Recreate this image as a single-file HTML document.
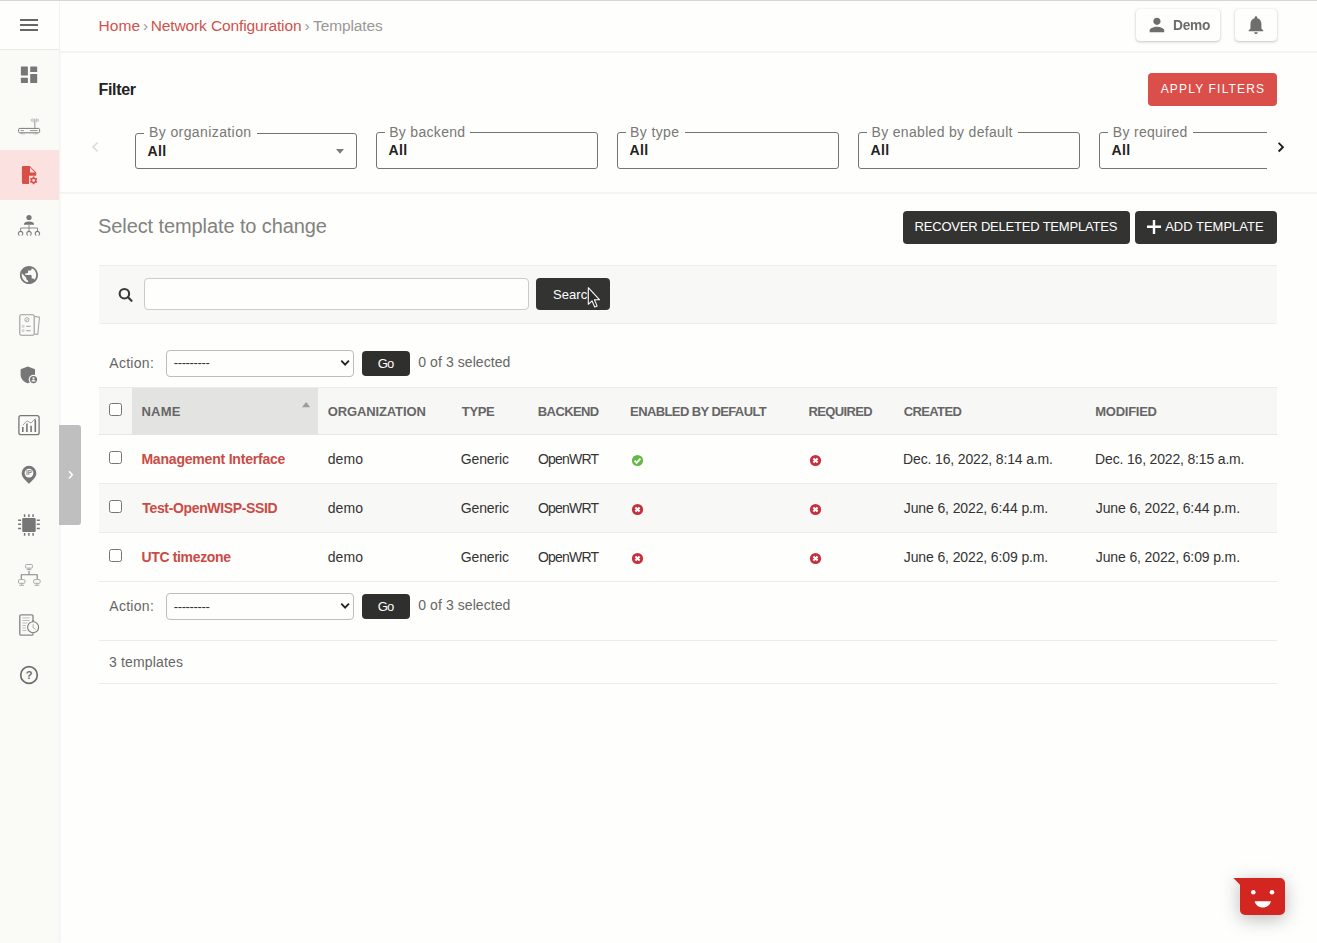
<!DOCTYPE html>
<html lang="en">
<head>
<meta charset="utf-8">
<title>Select template to change | OpenWISP</title>
<style>
*{box-sizing:border-box;margin:0;padding:0}
html,body{width:1317px;height:943px;overflow:hidden}
body{background:#fefefc;font-family:"Liberation Sans",sans-serif;color:#333;font-size:14px;position:relative}
.abs{position:absolute}
a{text-decoration:none;color:inherit}
.t{position:absolute;white-space:nowrap;line-height:1}
.lnk{color:#d0524c}
#topline{left:0;top:0;width:1317px;height:1px;background:#d6d6d6}
#sidebar{left:0;top:1px;width:59px;height:942px;background:#fafaf6;box-shadow:1px 0 2px rgba(0,0,0,.07)}
#hamb{left:0;top:1px;width:59px;height:49px;background:#fefefc;border-bottom:1px solid #e9e9e7}
#hamb i{position:absolute;left:20px;width:18px;height:2px;background:#666}
#topbar{left:60px;top:1px;width:1257px;height:52px;border-bottom:2px solid #f4f4f2;background:#fefefc}
#menu-active{left:0;top:150px;width:59px;height:50px;background:#fbe2e0}
#handle{left:59px;top:425px;width:22px;height:100px;background:#bfbfbf;border-radius:0 3px 3px 0}
.btn-top{position:absolute;top:9px;height:32px;background:#fefefc;border-radius:4px;box-shadow:0 1px 3px rgba(0,0,0,.22),0 0 1px rgba(0,0,0,.12)}
#apply{left:1148px;top:73px;width:129px;height:33px;background:#da4f49;border-radius:4px}
.fbox{position:absolute;top:132px;height:37px;width:222px;border:1px solid #747472;border-radius:3px}
.fgap{position:absolute;top:129px;height:6px;background:#fefefc}
#fsec-border{left:60px;top:192px;width:1257px;height:2px;background:#f4f4f2}
.dbtn{position:absolute;top:211px;height:33px;background:#333331;border-radius:4px}
#searchbar{left:99px;top:265px;width:1178px;height:59px;background:#f8f8f6;border-top:1px solid #ededeb;border-bottom:1px solid #ededeb}
#sinput{left:144px;top:278px;width:385px;height:32px;background:#fefefc;border:1px solid #cbcbc9;border-radius:4px}
#sbtn{left:536px;top:278px;width:74px;height:32px;background:#333331;border-radius:4px}
.sel{position:absolute;left:166px;width:188px;height:27px;border:1px solid #bdbdbb;border-radius:4px;background:#fefefc}
.go{position:absolute;left:362px;width:48px;height:25px;background:#2f2f2d;border-radius:4px}
#thead{left:99px;top:387px;width:1178px;height:48px;background:#f7f7f5;border-top:1px solid #ebebe9;border-bottom:1px solid #e6e6e4}
#th-name{left:132px;top:388px;width:186px;height:46px;background:#e3e3e1}
.th{font-size:13px;font-weight:bold;color:#666}
.row{position:absolute;left:99px;width:1178px;height:49px;border-bottom:1px solid #ebebe9}
.row.alt{background:#f8f8f6}
.td{font-size:14px;color:#333}
.nm{font-size:14px;font-weight:bold;color:#cb4a45}
.cb{position:absolute;left:109px;width:13px;height:13px;border:1px solid #767676;border-radius:2.5px;background:#fff}
.hl{position:absolute;left:99px;width:1178px;height:1px;background:#ebebe9}
.g{color:#666}
svg{position:absolute;overflow:visible}
</style>
</head>
<body>
<div class="abs" id="sidebar"></div>
<div class="abs" id="hamb"><i style="top:18px"></i><i style="top:23px"></i><i style="top:28px"></i></div>
<div class="abs" id="topbar"></div>
<div class="abs" id="topline"></div>
<div class="abs" id="menu-active"></div>
<div class="abs" id="handle"></div>

<!-- breadcrumbs -->
<a href="#" class="t lnk" style="left:98.6px;top:18px;font-size:15.5px;letter-spacing:0.07px">Home</a>
<span class="t" style="left:142.9px;top:18px;font-size:15.5px;color:#999;letter-spacing:0.00px">&rsaquo;</span>
<a href="#" class="t lnk" style="left:150.8px;top:18px;font-size:15.5px;letter-spacing:-0.13px">Network Configuration</a>
<span class="t" style="left:304.6px;top:18px;font-size:15.5px;color:#999;letter-spacing:0.00px">&rsaquo;</span>
<span class="t" style="left:313.0px;top:18px;font-size:15.5px;color:#9a9894;letter-spacing:-0.10px">Templates</span>

<!-- user buttons -->
<div class="btn-top" style="left:1136px;width:84px"></div>
<span class="t" style="left:1173.2px;top:17px;font-size:15px;font-weight:bold;color:#6b6b6b;letter-spacing:-0.3px;transform:scaleX(.915);transform-origin:0 0">Demo</span>
<div class="btn-top" style="left:1235px;width:42px"></div>

<!-- filter -->
<span class="t" style="left:98.5px;top:82px;font-size:16px;font-weight:bold;color:#222;letter-spacing:-0.34px">Filter</span>
<div class="abs" id="apply"></div>
<span class="t" style="left:1160.7px;top:83px;font-size:12px;color:#fff;letter-spacing:1.17px">APPLY FILTERS</span>

<div class="fbox" style="left:135px;top:133px;height:36px"></div>
<div class="fbox" style="left:376px"></div>
<div class="fbox" style="left:617px"></div>
<div class="fbox" style="left:858px"></div>
<div class="fbox" style="left:1099px"></div>
<div class="fgap" style="left:144px;width:112.5px;top:130px"></div>
<div class="fgap" style="left:385px;width:85px"></div>
<div class="fgap" style="left:626px;width:58.5px"></div>
<div class="fgap" style="left:867px;width:151.3px"></div>
<div class="fgap" style="left:1108px;width:85px"></div>
<span class="t g" style="left:149.0px;top:125px;font-size:14px;color:#787876;letter-spacing:0.40px">By organization</span>
<span class="t g" style="left:389.2px;top:125px;font-size:14px;color:#787876;letter-spacing:0.31px">By backend</span>
<span class="t g" style="left:630.0px;top:125px;font-size:14px;color:#787876;letter-spacing:0.40px">By type</span>
<span class="t g" style="left:871.6px;top:125px;font-size:14px;color:#787876;letter-spacing:0.31px">By enabled by default</span>
<span class="t g" style="left:1112.8px;top:125px;font-size:14px;color:#787876;letter-spacing:0.30px">By required</span>
<span class="t" style="left:147.4px;top:144px;font-size:14px;font-weight:bold;color:#222;letter-spacing:0.44px">All</span>
<span class="t" style="left:388.4px;top:143px;font-size:14px;font-weight:bold;color:#222;letter-spacing:0.44px">All</span>
<span class="t" style="left:629.4px;top:143px;font-size:14px;font-weight:bold;color:#222;letter-spacing:0.44px">All</span>
<span class="t" style="left:870.4px;top:143px;font-size:14px;font-weight:bold;color:#222;letter-spacing:0.44px">All</span>
<span class="t" style="left:1111.4px;top:143px;font-size:14px;font-weight:bold;color:#222;letter-spacing:0.44px">All</span>
<div class="abs" style="left:1267px;top:120px;width:50px;height:60px;background:#fefefc"></div>
<div class="abs" id="fsec-border"></div>

<!-- title + buttons -->
<span class="t" style="left:98.1px;top:216px;font-size:20px;color:#828280;letter-spacing:-0.10px">Select template to change</span>
<div class="dbtn" style="left:903px;width:227px"></div>
<span class="t" style="left:914.6px;top:220px;font-size:13px;color:#fff;letter-spacing:-0.20px">RECOVER DELETED TEMPLATES</span>
<div class="dbtn" style="left:1135px;width:142px"></div>
<span class="t" style="left:1165.2px;top:220px;font-size:13px;color:#fff;letter-spacing:-0.00px">ADD TEMPLATE</span>

<!-- search -->
<div class="abs" id="searchbar"></div>
<div class="abs" id="sinput"></div>
<div class="abs" id="sbtn"></div>
<span class="t" style="left:553.1px;top:288px;font-size:13px;color:#fff;letter-spacing:0.02px">Search</span>

<!-- actions top -->
<span class="t g" style="left:109.3px;top:356px;font-size:14px;letter-spacing:0.28px">Action:</span>
<div class="sel" style="top:350px"></div>
<span class="t" style="left:173.7px;top:356px;font-size:13px;color:#333;letter-spacing:-0.35px">---------</span>
<div class="go" style="top:351px"></div>
<span class="t" style="left:377.7px;top:357px;font-size:13px;color:#fff;letter-spacing:-0.70px">Go</span>
<span class="t g" style="left:418.3px;top:355px;font-size:14px;letter-spacing:0.07px">0 of 3 selected</span>

<!-- table -->
<div class="abs" id="thead"></div>
<div class="abs" id="th-name"></div>
<div class="cb" style="top:403px"></div>
<span class="t th" style="left:141.4px;top:405px;letter-spacing:0.25px">NAME</span>
<span class="t th" style="left:327.8px;top:405px;letter-spacing:-0.13px">ORGANIZATION</span>
<span class="t th" style="left:461.8px;top:405px;letter-spacing:-0.35px">TYPE</span>
<span class="t th" style="left:537.8px;top:405px;letter-spacing:-0.59px">BACKEND</span>
<span class="t th" style="left:630.1px;top:405px;letter-spacing:-0.60px">ENABLED BY DEFAULT</span>
<span class="t th" style="left:808.4px;top:405px;letter-spacing:-0.61px">REQUIRED</span>
<span class="t th" style="left:903.7px;top:405px;letter-spacing:-0.62px">CREATED</span>
<span class="t th" style="left:1095.2px;top:405px;letter-spacing:-0.25px">MODIFIED</span>

<div class="row" style="top:435px"></div>
<div class="row alt" style="top:484px"></div>
<div class="row" style="top:533px"></div>

<div class="cb" style="top:451px"></div>
<a href="#" class="t nm" style="left:141.4px;top:452px;letter-spacing:-0.20px">Management Interface</a>
<span class="t td" style="left:327.7px;top:452px;letter-spacing:0.15px">demo</span>
<span class="t td" style="left:460.8px;top:452px;letter-spacing:-0.14px">Generic</span>
<span class="t td" style="left:538.0px;top:452px;letter-spacing:-0.80px">OpenWRT</span>
<span class="t td" style="left:903.1px;top:452px;letter-spacing:-0.15px">Dec. 16, 2022, 8:14 a.m.</span>
<span class="t td" style="left:1095.1px;top:452px;letter-spacing:-0.17px">Dec. 16, 2022, 8:15 a.m.</span>

<div class="cb" style="top:500px"></div>
<a href="#" class="t nm" style="left:142.3px;top:501px;letter-spacing:-0.35px">Test-OpenWISP-SSID</a>
<span class="t td" style="left:327.7px;top:501px;letter-spacing:0.15px">demo</span>
<span class="t td" style="left:460.8px;top:501px;letter-spacing:-0.14px">Generic</span>
<span class="t td" style="left:538.0px;top:501px;letter-spacing:-0.80px">OpenWRT</span>
<span class="t td" style="left:903.8px;top:501px;letter-spacing:-0.12px">June 6, 2022, 6:44 p.m.</span>
<span class="t td" style="left:1095.8px;top:501px;letter-spacing:-0.13px">June 6, 2022, 6:44 p.m.</span>

<div class="cb" style="top:549px"></div>
<a href="#" class="t nm" style="left:141.4px;top:550px;letter-spacing:-0.33px">UTC timezone</a>
<span class="t td" style="left:327.7px;top:550px;letter-spacing:0.15px">demo</span>
<span class="t td" style="left:460.8px;top:550px;letter-spacing:-0.14px">Generic</span>
<span class="t td" style="left:538.0px;top:550px;letter-spacing:-0.80px">OpenWRT</span>
<span class="t td" style="left:903.8px;top:550px;letter-spacing:-0.12px">June 6, 2022, 6:09 p.m.</span>
<span class="t td" style="left:1095.8px;top:550px;letter-spacing:-0.13px">June 6, 2022, 6:09 p.m.</span>

<!-- actions bottom -->
<span class="t g" style="left:109.3px;top:599px;font-size:14px;letter-spacing:0.28px">Action:</span>
<div class="sel" style="top:593px"></div>
<span class="t" style="left:173.7px;top:600px;font-size:13px;color:#333;letter-spacing:-0.35px">---------</span>
<div class="go" style="top:594px"></div>
<span class="t" style="left:377.7px;top:600px;font-size:13px;color:#fff;letter-spacing:-0.70px">Go</span>
<span class="t g" style="left:418.3px;top:598px;font-size:14px;letter-spacing:0.07px">0 of 3 selected</span>

<div class="hl" style="top:640px"></div>
<span class="t" style="left:108.9px;top:655px;font-size:14px;color:#666;letter-spacing:0.17px">3 templates</span>
<div class="hl" style="top:683px"></div>
<!-- sidebar icons -->
<svg style="left:0;top:0" width="60" height="943" viewBox="0 0 60 943" fill="none">
 <!-- dashboard -->
 <g fill="#777"><rect x="20.9" y="66.6" width="7" height="9" rx=".5"/><rect x="20.9" y="77.8" width="7" height="5.2" rx=".5"/><rect x="30.2" y="66.6" width="7" height="5.3" rx=".5"/><rect x="30.2" y="74.1" width="7" height="8.9" rx=".5"/></g>
 <!-- router -->
 <g stroke="#7a7a7a" stroke-width="1" fill="none">
  <rect x="18.6" y="128.4" width="21" height="4.4" rx="1.2"/>
  <path d="M34.800 128V119" stroke="#b0b0b0" stroke-width="1.400"/>
  <path d="M33 118.3v4M31.4 119v2.6M36.6 118.3v4M38.2 119v2.6" stroke="#c6c6c6" stroke-width="1.300"/>
  <path d="M20.6 130.6h3.2M30 130.6h7.6" stroke-width=".8"/>
  <path d="M20.4 133.8h4.4M33.4 133.8h4.4" stroke="#aaa" stroke-width=".8"/>
 </g>
 <!-- templates (active) -->
 <g>
  <path d="M23.200 165.900h6.600l6.400 6.600v3.200h-7.100v8.200H23.200a1.300 1.300 0 0 1-1.300-1.300V167.200a1.300 1.300 0 0 1 1.300-1.300z" fill="#d64f49"/>
  <path d="M30 167.300v5.100h4.900z" fill="#fbddda"/>
  <g fill="#d64f49"><circle cx="33.600" cy="180.400" r="2.800"/>
   <g stroke="#d64f49" stroke-width="1.700"><path d="M33.600 176.600v7.600M30.300 178.500l6.600 3.800M30.300 182.300l6.600-3.800"/></g>
  </g>
  <circle cx="33.600" cy="180.400" r="1.350" fill="#fbe2e0"/>
 </g>
 <!-- organizations -->
 <g>
  <circle cx="29" cy="217.5" r="2.6" fill="#777"/>
  <path d="M23.8 224.7c0-2.2 2.3-3.3 5.2-3.3s5.2 1.1 5.2 3.3z" fill="#777"/>
  <path d="M29 224.7v6.2M20.6 231v-3h16.9v3" stroke="#8a8a8a" stroke-width="1"/>
  <g stroke="#7c7c7c" stroke-width="1.100"><path d="M19.500 235.500a2.200 2.200 0 1 1 2.200 0M27.900 235.500a2.200 2.200 0 1 1 2.200 0M36.300 235.500a2.200 2.200 0 1 1 2.200 0"/></g>
 </g>
 <!-- globe -->
 <g transform="translate(18.1 264.1) scale(.906)"><path fill="#777" d="M12 2C6.48 2 2 6.48 2 12s4.48 10 10 10 10-4.48 10-10S17.52 2 12 2zm-1 17.930c-3.950-.490-7-3.850-7-7.930 0-.620.080-1.210.210-1.790L9 15v1c0 1.100.900 2 2 2v1.930zm6.900-2.540c-.260-.810-1-1.390-1.900-1.390h-1v-3c0-.550-.450-1-1-1H8v-2h2c.550 0 1-.450 1-1V7h2c1.100 0 2-.900 2-2v-.410c2.930 1.190 5 4.060 5 7.410 0 2.080-.800 3.970-2.100 5.390z"/></g>
 <!-- papers -->
 <g stroke="#9a9a9a" stroke-width="1.1">
  <path d="M34.6 316.4l4.9.8-1.7 17.200-3.200-.3" stroke="#a8a8a8"/>
  <rect x="19.8" y="314.700" width="14.400" height="20.600" rx="1.500"/>
  <circle cx="26.900" cy="319.700" r="2.100" stroke-width=".8"/>
  <path d="M25.800 321l2.200-2.600" stroke-width=".7"/>
  <path d="M22.300 325.500h1.800v1.800h-1.800zM22.300 329.700h1.800v1.800h-1.800z" stroke-width=".6" stroke="#b5b5b5"/>
  <path d="M26.300 326.400h4.300M26.300 330.600h4.300" stroke-width="1.200" stroke="#b0b0b0"/>
 </g>
 <!-- shield -->
 <g>
  <path d="M27.800 366.400l7.200 2.900v5.300c0 4.100-2.900 7.600-7.200 8.700-4.300-1.100-7.200-4.600-7.200-8.700v-5.300z" fill="#777"/>
  <circle cx="33.500" cy="379.600" r="4.800" fill="#fafaf6"/>
  <circle cx="33.500" cy="379.600" r="3.600" fill="#777"/>
  <circle cx="33.500" cy="378.400" r="1.100" fill="#fafaf6"/>
  <path d="M31.300 381.600c.3-1.100 1.200-1.500 2.200-1.500s1.900.4 2.200 1.500z" fill="#fafaf6"/>
 </g>
 <!-- chart -->
 <g stroke="#777">
  <rect x="18.900" y="415.700" width="20.200" height="19" rx="2" stroke-width="1.300"/>
  <path d="M22.800 432v-5M26.900 432v-8.500M31.100 432v-6.300M35.300 432v-12.500" stroke-width="1.600"/>
  <path d="M22.800 425.200l4.100-4.300 4.200 2.100 4.200-4.500" stroke-width=".8" stroke="#8a8a8a"/>
 </g>
 <!-- ip pin -->
 <g>
  <path d="M29 465.800a7.350 7.350 0 0 1 7.350 7.350c0 4.300-4.600 7.600-7.350 10.700-2.750-3.100-7.350-6.400-7.350-10.700A7.350 7.350 0 0 1 29 465.800z" fill="#777"/>
  <circle cx="29" cy="473.100" r="4.400" fill="#fafaf6"/>
  <text x="29" y="475.400" text-anchor="middle" font-family="Liberation Sans, sans-serif" font-size="6.500" font-weight="bold" fill="#8a8a8a">IP</text>
 </g>
 <!-- chip -->
 <g fill="#777">
  <rect x="22.200" y="518" width="13.500" height="13.900" rx="1"/>
  <g stroke="#777" stroke-width="1.500">
   <path d="M24.600 514.200v2.700M28.900 514.200v2.700M33.100 514.200v2.700M24.600 533.100v2.700M28.900 533.100v2.700M33.100 533.100v2.700"/>
   <path d="M18.100 520.300h3M18.100 524.300h3M18.100 528.500h3M36.800 520.300h3M36.800 524.300h3M36.800 528.500h3"/>
  </g>
 </g>
 <!-- topology -->
 <g stroke="#a2a2a2" stroke-width=".9">
  <rect x="25.600" y="564.500" width="6.800" height="3.600" rx=".8"/>
  <path d="M29 568.100v1.400M26.800 569.600h4.400"/>
  <path d="M29 570.800v4M21.300 579v-4.200h15.900v4.200" stroke="#858585" stroke-width="1.100"/>
  <rect x="18.500" y="579.600" width="6.400" height="3.700" rx=".8"/>
  <path d="M21.700 583.300v1.800M19.300 585.300h4.800"/>
  <rect x="33.700" y="579.600" width="6.400" height="3.700" rx=".8"/>
  <path d="M36.900 583.300v1.800M34.500 585.300h4.800"/>
 </g>
 <!-- doc + clock -->
 <g stroke="#8a8a8a">
  <path d="M33 621.600V616.100a1.200 1.200 0 0 0-1.200-1.200H21a1.200 1.200 0 0 0-1.200 1.200v17.800a1.200 1.200 0 0 0 1.200 1.200h10.800a1.200 1.200 0 0 0 1.200-1.200v-.600" stroke-width="1.400"/>
  <path d="M22.400 618h7.100M22.400 620.500h7.100M22.400 623h5M22.400 625.600h3.600M22.400 628.100h3.300M22.400 630.500h4" stroke="#b5b5b5" stroke-width=".9"/>
  <circle cx="33.100" cy="627.300" r="5.500" fill="#fafaf6" stroke="#7a7a7a" stroke-width="1.100"/>
  <path d="M33.100 624.300v3.200l2.400 2.100" stroke="#9a9a9a" stroke-width=".9"/>
  <path d="M32 621h2.200" stroke-width="1.400"/>
 </g>
 <!-- help -->
 <g>
  <circle cx="29" cy="675" r="8.300" stroke="#6e6e6e" stroke-width="1.700"/>
  <text x="29" y="679" text-anchor="middle" font-family="Liberation Sans, sans-serif" font-size="11" font-weight="bold" fill="#6e6e6e">?</text>
 </g>
 <!-- handle chevron drawn separately -->
</svg>
<svg style="left:60px;top:425px" width="22" height="100" viewBox="60 425 22 100" fill="none"><path d="M69 471.200l3.300 3.600-3.300 3.600" stroke="#fff" stroke-width="1.500"/></svg>
<!-- top bar icons -->
<svg style="left:1146.150px;top:13.950px" width="21.900" height="21.900" viewBox="0 0 24 24"><path fill="#6e6e6e" d="M12 12c2.210 0 4-1.790 4-4s-1.790-4-4-4-4 1.790-4 4 1.790 4 4 4zm0 2c-2.670 0-8 1.340-8 4v2h16v-2c0-2.660-5.330-4-8-4z"/></svg>
<svg style="left:1245.050px;top:13.600px" width="21.900" height="21.900" viewBox="0 0 24 24"><path fill="#6e6e6e" d="M12 22c1.100 0 2-.900 2-2h-4c0 1.100.890 2 2 2zm6-6v-5c0-3.070-1.640-5.640-4.500-6.320V4c0-.830-.670-1.500-1.500-1.500s-1.500.670-1.500 1.500v.680C7.630 5.360 6 7.920 6 11v5l-2 2v1h16v-1l-2-2z"/></svg>
<!-- filter arrows -->
<svg style="left:0;top:0" width="1317" height="943" viewBox="0 0 1317 943" fill="none">
 <path d="M97.600 142.600l-4.600 4.400 4.600 4.400" stroke="#dcdcdc" stroke-width="1.700"/>
 <path d="M1278.600 142.900l4.300 4.300-4.300 4.300" stroke="#1c1c1c" stroke-width="1.900"/>
 <path d="M336 149.100h8l-4 4.700z" fill="#7c7c7a"/>
 <!-- plus -->
 <path d="M1154 220v14M1147 226.800h14" stroke="#fff" stroke-width="2.400"/>
 <!-- search icon -->
 <circle cx="124.400" cy="293.700" r="4.750" stroke="#3a3a38" stroke-width="2.100"/>
 <path d="M128 297.300l3.500 3.500" stroke="#3a3a38" stroke-width="2.200" stroke-linecap="round"/>
 <!-- select chevrons -->
 <path d="M341.300 360.600l3.800 4 3.800-4" stroke="#222" stroke-width="1.800"/>
 <path d="M341.300 603.600l3.800 4 3.800-4" stroke="#222" stroke-width="1.800"/>
 <!-- sort arrow -->
 <path d="M302 407.300h8.200l-4.100-5.200z" fill="#9c9c9c"/>
 <!-- bool icons -->
 <g>
  <circle cx="637.500" cy="460.500" r="5.600" fill="#64b946"/>
  <path d="M634.600 460.700l2 2.100 3.800-4.200" stroke="#fff" stroke-width="1.900"/>
  <g fill="#c72f3e"><circle cx="815.500" cy="460.500" r="5.600"/><circle cx="637.500" cy="509.500" r="5.600"/><circle cx="815.500" cy="509.500" r="5.600"/><circle cx="637.500" cy="558.500" r="5.600"/><circle cx="815.500" cy="558.500" r="5.600"/></g>
  <g stroke="#fff" stroke-width="2.100">
   <path d="M813.400 458.400l4.200 4.200M817.600 458.400l-4.200 4.200"/>
   <path d="M635.400 507.400l4.200 4.200M639.600 507.400l-4.200 4.200"/>
   <path d="M813.400 507.400l4.200 4.200M817.600 507.400l-4.200 4.200"/>
   <path d="M635.400 556.400l4.200 4.200M639.600 556.400l-4.200 4.200"/>
   <path d="M813.400 556.400l4.200 4.200M817.600 556.400l-4.200 4.200"/>
  </g>
 </g>
 <!-- mouse cursor -->
 <path d="M588.300 287.700v16.600l3.700-3.500 2.700 6.200 2.400-1.100-2.700-6.100h5.200z" fill="#2a2a29" stroke="#fff" stroke-width="1.050" stroke-linejoin="round"/>
</svg>
<!-- chat widget -->
<svg style="left:1195px;top:845px;filter:drop-shadow(0 4px 9px rgba(0,0,0,.27))" width="122" height="98" viewBox="1195 845 122 98">
 <path d="M1233.400 878h46.600a5 5 0 0 1 5 5v27a5 5 0 0 1-5 5h-35a5 5 0 0 1-5-5v-25.200z" fill="#d32620"/>
 <circle cx="1253.300" cy="892.200" r="2.300" fill="#fff"/><circle cx="1272" cy="892.200" r="2.300" fill="#fff"/>
 <path d="M1254.700 901.300h16.200c-.6 3.700-4 6.300-8.100 6.300s-7.500-2.600-8.100-6.300z" fill="#fff"/>
</svg>

</body>
</html>
